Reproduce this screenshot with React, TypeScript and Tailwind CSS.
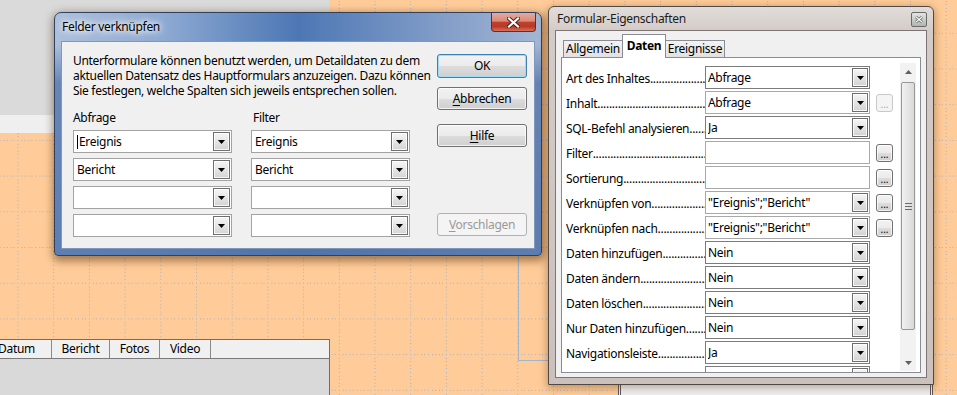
import React from "react";

const DOTS = "..................................................................";

function Tri({ color = "#000" }: { color?: string }) {
  return (
    <svg width="7" height="4" viewBox="0 0 7 4">
      <polygon points="0,0 7,0 3.5,4" fill={color} />
    </svg>
  );
}

function TriUp({ color = "#000" }: { color?: string }) {
  return (
    <svg width="7" height="4" viewBox="0 0 7 4">
      <polygon points="0,4 7,4 3.5,0" fill={color} />
    </svg>
  );
}

function Grid() {
  const h = Array.from({ length: 10 });
  const v = Array.from({ length: 9 });
  return (
    <svg className="absolute left-0 top-0" width="957" height="395">
      <defs>
        <pattern id="dotgrid" x="17.5" y="32.8" width="35.7" height="35.7" patternUnits="userSpaceOnUse">
          {h.map((_, i) => (
            <rect key={"h" + i} x={i * 3.57} y={0} width={1} height={1} fill="#a2b1c8" shapeRendering="crispEdges" />
          ))}
          {v.map((_, i) => (
            <rect key={"v" + i} x={0} y={(i + 1) * 3.57} width={1} height={1} fill="#a2b1c8" shapeRendering="crispEdges" />
          ))}
        </pattern>
      </defs>
      <rect width="957" height="395" fill="url(#dotgrid)" />
    </svg>
  );
}

function LeftCombo({ text, cursor }: { text?: string; cursor?: boolean }) {
  return (
    <div className="flex h-[23px] w-[159px] items-center border border-[#a3a3a3] bg-white pl-[3px] pr-[1px]">
      <div className="flex flex-1 items-center whitespace-nowrap leading-[15px]">
        {cursor && <span className="mr-[1px] inline-block h-[14px] w-px bg-black" />}
        {text}
      </div>
      <div className="flex h-[19px] w-[17px] items-center justify-center border border-[#6f6f6f] bg-[linear-gradient(to_bottom,#f6f6f6,#d4d4d4)] shadow-[inset_0_0_0_1px_rgba(255,255,255,0.8)]">
        <Tri />
      </div>
    </div>
  );
}

function WinButton({ children, primary, disabled }: { children: React.ReactNode; primary?: boolean; disabled?: boolean }) {
  if (disabled) {
    return (
      <div className="flex h-[23px] w-[90px] items-center justify-center rounded-[3px] border border-[#adb2b5] bg-[#f4f4f4] text-[#9a9a9a]">
        {children}
      </div>
    );
  }
  if (primary) {
    return (
      <div className="flex h-[24px] w-[90px] items-center justify-center rounded-[3px] border border-[#3c7fb1] bg-[linear-gradient(to_bottom,#f2f2f2_0%,#ebebeb_50%,#dddddd_50%,#cfcfcf_100%)] shadow-[inset_0_0_0_1px_#9fdcf7]">
        {children}
      </div>
    );
  }
  return (
    <div className="flex h-[23px] w-[90px] items-center justify-center rounded-[3px] border border-[#707070] bg-[linear-gradient(to_bottom,#f2f2f2_0%,#ebebeb_50%,#dddddd_50%,#cfcfcf_100%)] shadow-[inset_0_0_0_1px_rgba(255,255,255,0.75)]">
      {children}
    </div>
  );
}

function LeftDialog() {
  return (
    <div className="absolute left-[54px] top-[12px] flex h-[244px] w-[488px] flex-col rounded-t-[7px] rounded-b-[4px] border border-[#2f415f] bg-[linear-gradient(to_bottom,rgba(80,115,170,0)_0px,rgba(80,115,170,0)_32px,rgba(80,115,170,0.75)_70px,rgba(80,115,170,0.85)_100%),linear-gradient(to_right,#adc0dc_0%,#8eaad3_22%,#4d77b4_50%,#7f9bc7_78%,#a3b6d4_100%)] px-[6px] pb-[6px] shadow-[1px_3px_9px_2px_rgba(70,35,0,0.5)]">
      <div className="relative flex h-[28px] shrink-0 items-center pl-[1px]">
        <span className="text-[12px] [text-shadow:0_0_5px_#fff,0_0_9px_#fff,0_0_12px_rgba(255,255,255,0.8)]">Felder verknüpfen</span>
        <div className="absolute right-[-1px] top-0 flex h-[19px] w-[45px] items-center justify-center rounded-b-[4px] border border-t-0 border-[#6b2a22] bg-[linear-gradient(to_bottom,#e6aa9e_0%,#d88a7a_45%,#c0402c_52%,#b83a26_75%,#d8705a_100%)]">
          <svg width="13" height="11" viewBox="0 0 13 11">
            <path d="M2 1.5 L11 9.5 M11 1.5 L2 9.5" stroke="#4a1c16" strokeWidth="4" strokeLinecap="square" />
            <path d="M2 1.5 L11 9.5 M11 1.5 L2 9.5" stroke="#ffffff" strokeWidth="2.2" strokeLinecap="square" />
          </svg>
        </div>
      </div>
      <div className="flex min-h-0 flex-1 border border-[#7f97bb] bg-[#f0f0f0]">
        <div className="flex w-[349px] flex-col pl-[11px] pt-[11px]">
          <p className="whitespace-nowrap leading-[15px]">
            Unterformulare können benutzt werden, um Detaildaten zu dem
            <br />
            aktuellen Datensatz des Hauptformulars anzuzeigen. Dazu können
            <br />
            Sie festlegen, welche Spalten sich jeweils entsprechen sollen.
          </p>
          <div className="mt-[12px] flex gap-[19px]">
            <div className="flex flex-col">
              <div className="h-[15px] leading-[15px]">Abfrage</div>
              <div className="mt-[5px] flex flex-col gap-[5px]">
                <LeftCombo text="Ereignis" cursor />
                <LeftCombo text="Bericht" />
                <LeftCombo />
                <LeftCombo />
              </div>
            </div>
            <div className="flex flex-col">
              <div className="h-[15px] pl-[2px] leading-[15px]">Filter</div>
              <div className="mt-[5px] flex flex-col gap-[5px]">
                <LeftCombo text="Ereignis" />
                <LeftCombo text="Bericht" />
                <LeftCombo />
                <LeftCombo />
              </div>
            </div>
          </div>
        </div>
        <div className="ml-[26px] flex flex-col pt-[12px]">
          <WinButton primary>OK</WinButton>
          <div className="mt-[9px]">
            <WinButton>
              <span><span className="underline underline-offset-[2px]">A</span>bbrechen</span>
            </WinButton>
          </div>
          <div className="mt-[14px]">
            <WinButton>
              <span><span className="underline underline-offset-[2px]">H</span>ilfe</span>
            </WinButton>
          </div>
          <div className="mt-[66px]">
            <WinButton disabled>
              <span><span className="underline underline-offset-[2px]">V</span>orschlagen</span>
            </WinButton>
          </div>
        </div>
      </div>
    </div>
  );
}

function DotsButton({ disabled }: { disabled?: boolean }) {
  if (disabled) {
    return (
      <div className="flex h-[18px] w-[17px] items-end justify-center rounded-[3px] border border-[#c9c9c9] bg-[#f4f4f4] pb-[2px] text-[10px] leading-[10px] tracking-normal text-[#a8a8a8]">
        ...
      </div>
    );
  }
  return (
    <div className="flex h-[18px] w-[17px] items-end justify-center rounded-[3px] border border-[#707070] bg-[linear-gradient(to_bottom,#f2f2f2_0%,#ebebeb_50%,#dddddd_50%,#cfcfcf_100%)] pb-[2px] text-[10px] leading-[10px] tracking-normal shadow-[inset_0_0_0_1px_rgba(255,255,255,0.75)]">
      ...
    </div>
  );
}

type Row = { label: string; value?: string; kind: "combo" | "text"; btn?: "on" | "off"; light?: boolean };

const rows: Row[] = [
  { label: "Art des Inhaltes", value: "Abfrage", kind: "combo" },
  { label: "Inhalt", value: "Abfrage", kind: "combo", btn: "off", light: true },
  { label: "SQL-Befehl analysieren", value: "Ja", kind: "combo" },
  { label: "Filter", kind: "text", btn: "on" },
  { label: "Sortierung", kind: "text", btn: "on" },
  { label: "Verknüpfen von", value: "\"Ereignis\";\"Bericht\"", kind: "combo", btn: "on", light: true },
  { label: "Verknüpfen nach", value: "\"Ereignis\";\"Bericht\"", kind: "combo", btn: "on", light: true },
  { label: "Daten hinzufügen", value: "Nein", kind: "combo" },
  { label: "Daten ändern", value: "Nein", kind: "combo" },
  { label: "Daten löschen", value: "Nein", kind: "combo" },
  { label: "Nur Daten hinzufügen", value: "Nein", kind: "combo" },
  { label: "Navigationsleiste", value: "Ja", kind: "combo" },
  { label: "Zyklus", value: "Standard", kind: "combo" },
];

function PropRow({ r }: { r: Row }) {
  return (
    <div className="flex h-[23px] shrink-0 items-center">
      <div className="flex w-[139px] overflow-hidden whitespace-nowrap pt-[2px]">
        <span className="shrink-0">{r.label}</span>
        <span className="overflow-hidden">{DOTS}</span>
      </div>
      {r.kind === "combo" ? (
        <div className={"flex h-[23px] w-[165px] items-center border bg-white pl-[2px] pr-px " + (r.light ? "border-[#a9a9a9]" : "border-[#7c7c7c]")}>
          <span className="flex-1 overflow-hidden whitespace-nowrap">{r.value}</span>
          <div className="flex h-[19px] w-[16px] shrink-0 items-center justify-center border border-[#6d6d6d] bg-[linear-gradient(to_bottom,#f6f6f6,#d2d2d2)] shadow-[inset_0_0_0_1px_rgba(255,255,255,0.8)]">
            <Tri />
          </div>
        </div>
      ) : (
        <div className="h-[23px] w-[165px] border border-[#a9a9a9] bg-white" />
      )}
      <div className="ml-[6px] w-[17px]">
        {r.btn === "on" && <DotsButton />}
        {r.btn === "off" && <DotsButton disabled />}
      </div>
    </div>
  );
}

function RightDialog() {
  return (
    <div className="absolute left-[548px] top-[6px] flex h-[379px] w-[386px] flex-col rounded-t-[6px] border border-[#4f4845] bg-[linear-gradient(to_bottom,#e2ddda_0px,#d3cbc7_24px,#cbc1bc_100%)] px-[6px] pb-[6px] shadow-[0_2px_8px_1px_rgba(70,35,0,0.35)]">
      <div className="relative flex h-[23px] shrink-0 items-center pl-[2px] text-[#1b1b1b]">
        <span>Formular-Eigenschaften</span>
        <div className="absolute right-0 top-[5px] flex h-[15px] w-[16px] items-center justify-center rounded-[2px] border border-[#6a6a6a] bg-[linear-gradient(to_bottom,#e0e6e0,#aeb8ae)]">
          <svg width="8" height="7" viewBox="0 0 8 7">
            <path d="M1 1 L7 6 M7 1 L1 6" stroke="#555" strokeWidth="2.6" />
            <path d="M1 1 L7 6 M7 1 L1 6" stroke="#fff" strokeWidth="1.3" />
          </svg>
        </div>
      </div>
      <div className="flex min-h-0 flex-1 flex-col border border-[#7e7572] bg-[#f0f0f0] px-[5px] pb-[4px]">
        <div className="flex h-[26px] shrink-0 items-end pl-[2px] pt-[4px]">
          <div className="flex h-[17px] w-[60px] items-center justify-center border border-b-0 border-[#898c95] bg-[linear-gradient(to_bottom,#f3f3f3,#e1e1e1)]">
            Allgemein
          </div>
          <div className="relative z-10 -mb-px -ml-px flex h-[24px] w-[44px] items-start justify-center border border-b-0 border-[#898c95] bg-white pt-[2px] font-bold">
            Daten
          </div>
          <div className="-ml-px flex h-[17px] w-[60px] items-center justify-center border border-b-0 border-[#898c95] bg-[linear-gradient(to_bottom,#f3f3f3,#e1e1e1)]">
            Ereignisse
          </div>
        </div>
        <div className="flex min-h-0 flex-1 overflow-hidden border border-[#898c95] bg-white">
          <div className="flex min-h-0 flex-col gap-[2px] overflow-hidden pl-[4px] pt-[8px]">
            {rows.map((r) => (
              <PropRow key={r.label} r={r} />
            ))}
          </div>
          <div className="mb-px ml-[7px] mt-[5px] flex w-[16px] shrink-0 flex-col bg-[#f2f2f2]">
            <div className="flex h-[17px] shrink-0 items-center justify-center">
              <TriUp color="#606060" />
            </div>
            <div className="flex min-h-0 flex-1 flex-col">
              <div className="mx-px mt-[2px] flex h-[248px] shrink-0 items-center justify-center rounded-[2px] border border-[#979797] bg-[linear-gradient(to_right,#f1f1f1,#d9d9d9)]">
                <div className="flex flex-col gap-[2px]">
                  <div className="h-px w-[7px] bg-[#6a6a6a]" />
                  <div className="h-px w-[7px] bg-[#6a6a6a]" />
                  <div className="h-px w-[7px] bg-[#6a6a6a]" />
                </div>
              </div>
            </div>
            <div className="flex h-[17px] shrink-0 items-center justify-center">
              <Tri color="#606060" />
            </div>
          </div>
        </div>
      </div>
    </div>
  );
}

function BottomTable() {
  return (
    <div className="absolute left-0 top-[339px] h-[56px] w-[330px] border-r border-t border-[#6e6e6e] bg-[#d9d9d9]">
      <div className="flex h-[19px] border-b border-[#7a7a7a] bg-[#f0f0f0] leading-[18px]">
        <div className="-ml-[18px] w-[70px] border-r border-[#8a8a8a] text-center">Datum</div>
        <div className="w-[58px] border-r border-[#8a8a8a] text-center">Bericht</div>
        <div className="w-[50px] border-r border-[#8a8a8a] text-center">Fotos</div>
        <div className="w-[51px] border-r border-[#8a8a8a] text-center">Video</div>
      </div>
    </div>
  );
}

export default function App() {
  return (
    <div className="relative h-[395px] w-[957px] overflow-hidden bg-[#ffcc99] font-['Noto_Sans',sans-serif] text-[12px] tracking-[-0.3px] text-black">
      <Grid />
      <div className="absolute left-0 top-0 h-[115px] w-[329px] bg-[#dadada]" />
      <div className="absolute left-0 top-[115px] h-[18px] w-[329px] bg-[#efefef]" />
      <div className="absolute left-[518px] top-[250px] h-[111px] w-[40px] border-b border-l border-[#a3b6cc]" />
      <div className="absolute left-[618px] top-[384px] flex h-[11px] w-[315px] border-x-[3px] border-double border-[#5a5a5a] bg-[#f0f0f0]" />
      <BottomTable />
      <LeftDialog />
      <RightDialog />
    </div>
  );
}
